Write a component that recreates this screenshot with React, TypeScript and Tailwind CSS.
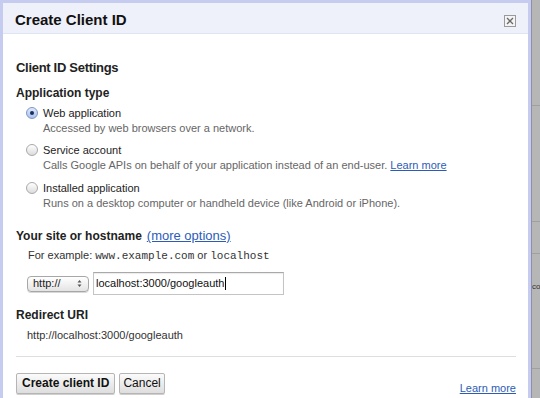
import React from "react";

const sans = { fontFamily: '"Liberation Sans", Arial, sans-serif' };

function Radio({ checked }: { checked?: boolean }) {
  return (
    <span
      className={
        "flex h-[12px] w-[12px] shrink-0 items-center justify-center rounded-full border " +
        (checked
          ? "border-[#7f96c4] bg-gradient-to-b from-[#dfe9fb] to-[#a9c2ee]"
          : "border-[#a9a9a9] bg-gradient-to-b from-[#ffffff] to-[#dcdcdc]")
      }
    >
      {checked && <span className="h-[4px] w-[4px] rounded-full bg-[#1b2f5c]" />}
    </span>
  );
}

function Option({
  title,
  desc,
  checked,
  link,
  className = "",
}: {
  title: string;
  desc: string;
  checked?: boolean;
  link?: boolean;
  className?: string;
}) {
  return (
    <div className={"flex flex-col " + className}>
      <div className="ml-[10px] flex items-center gap-[5px] text-[11px] leading-[16px] text-[#222]">
        <Radio checked={checked} />
        <span>{title}</span>
      </div>
      <div className="pl-[27px] text-[11px] leading-[15px] text-[#666]">
        {desc}
        {link && (
          <>
            {" "}
            <a className="text-[#2d5cb8] underline">Learn more</a>
          </>
        )}
      </div>
    </div>
  );
}

export default function App() {
  return (
    <div className="flex h-[398px] w-[540px] overflow-hidden bg-[#b6b6b6]" style={sans}>
      {/* dialog */}
      <div className="flex h-full w-[531px] shrink-0 flex-col border-l-[3px] border-r-[3px] border-t-[3px] border-[#c5ccef] bg-white">
        <div className="flex h-[31px] shrink-0 items-center justify-between border-b border-[#dfe3f3] bg-[#eef0fa] pl-[12px] pr-[12px] pt-[5px]">
          <span className="text-[15px] font-bold text-[#111]">Create Client ID</span>
          <span className="flex h-[12px] w-[12px] items-center justify-center border border-[#9a9a9a] bg-[#f4f4f4]">
            <svg width="8" height="8" viewBox="0 0 8 8">
              <path d="M1 1L7 7M7 1L1 7" stroke="#6a6a6a" strokeWidth="1.3" />
            </svg>
          </span>
        </div>

        <div className="flex flex-1 flex-col pl-[13px] pr-[12px]">
          <div className="mt-[26px] text-[13px] font-bold leading-[16px] tracking-[-0.3px] text-[#222]">
            Client ID Settings
          </div>
          <div className="mt-[9px] text-[12px] font-bold leading-[16px] text-[#222]">
            Application type
          </div>
          <Option className="mt-[4px]" checked title="Web application" desc="Accessed by web browsers over a network." />
          <Option
            className="mt-[6px]"
            title="Service account"
            desc="Calls Google APIs on behalf of your application instead of an end-user."
            link
          />
          <Option
            className="mt-[7px]"
            title="Installed application"
            desc="Runs on a desktop computer or handheld device (like Android or iPhone)."
          />

          <div className="mt-[17px] flex items-baseline gap-[5px] leading-[16px]">
            <span className="text-[12px] font-bold text-[#222]">Your site or hostname</span>
            <a className="text-[13px] text-[#2d5cb8] underline">(more options)</a>
          </div>
          <div className="mt-[3px] pl-[12px] text-[11px] leading-[16px] text-[#333]">
            For example:{" "}
            <span style={{ fontFamily: '"Liberation Mono", "Courier New", monospace' }}>www.example.com</span> or{" "}
            <span style={{ fontFamily: '"Liberation Mono", "Courier New", monospace' }}>localhost</span>
          </div>

          <div className="mt-[8px] flex items-center gap-[4px] pl-[11px]">
            <div className="flex h-[16px] w-[62px] items-center justify-between rounded-[4px] border border-[#a7a7a7] bg-gradient-to-b from-[#ffffff] to-[#e4e4e4] pl-[5px] pr-[6px] text-[11px] text-[#222] shadow-[0_1px_0_#d8d8d8]">
              <span>http://</span>
              <svg width="5" height="9" viewBox="0 0 5 9">
                <path d="M0.5 3.5L2.5 1L4.5 3.5Z M0.5 5.5L2.5 8L4.5 5.5Z" fill="#555" />
              </svg>
            </div>
            <div className="flex h-[23px] w-[191px] items-center border border-[#c4c4c4] border-t-[#a9a9a9] bg-white pl-[2px] text-[11px] text-[#111] shadow-[inset_0_1px_1px_rgba(0,0,0,0.08)]">
              <span>localhost:3000/googleauth</span>
              <span className="ml-[1px] h-[13px] w-px bg-[#000]" />
            </div>
          </div>

          <div className="mt-[12px] text-[12px] font-bold leading-[16px] text-[#222]">Redirect URI</div>
          <div className="mt-[4px] pl-[11px] text-[11px] leading-[16px] text-[#333]">
            http://localhost:3000/googleauth
          </div>

          <div className="mt-[13px] border-t border-[#dedede]" />

          <div className="mt-[13px] flex items-center">
            <button className="h-[21px] rounded-[2px] border border-[#b5b5b5] bg-gradient-to-b from-[#fbfbfb] to-[#dedede] px-[5px] text-[12px] font-bold text-[#111] shadow-[0_1px_0_#cfcfcf]">
              Create client ID
            </button>
            <button className="ml-[4px] h-[21px] rounded-[2px] border border-[#b5b5b5] bg-gradient-to-b from-[#fbfbfb] to-[#dedede] px-[3px] text-[12px] text-[#111] shadow-[0_1px_0_#cfcfcf]">
              Cancel
            </button>
            <a className="ml-auto mt-[10px] text-[11px] text-[#2d5cb8] underline">Learn more</a>
          </div>
        </div>
      </div>

      {/* page behind overlay */}
      <div className="flex flex-1 flex-col border-l border-[#8f90a8]">
        <div className="h-[106px] border-b border-[#a0a0a0]" />
        <div className="h-[116px] border-b border-[#a0a0a0]" />
        <div className="h-[32px] border-b border-[#a0a0a0]" />
        <div className="h-[115px] overflow-hidden border-b border-[#a0a0a0] pt-[26px] text-[8px] leading-[14px] text-[#333]">
          co
        </div>
        <div className="flex-1" />
      </div>
    </div>
  );
}
